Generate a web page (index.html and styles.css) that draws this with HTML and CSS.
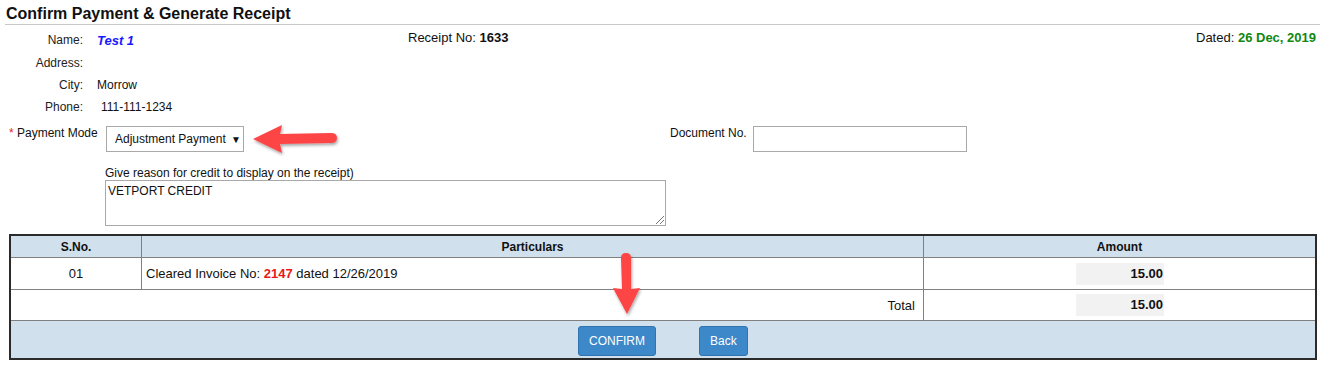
FILE: index.html
```html
<!DOCTYPE html>
<html lang="en">
<head>
  <meta charset="UTF-8" />
  <title>Confirm Payment &amp; Generate Receipt</title>
  <link rel="stylesheet" href="styles.css">
</head>
<body>
  <h1 class="page-title">Confirm Payment &amp; Generate Receipt</h1>

  <div class="receipt-head">
    <div class="client-info">
      <div class="info-row"><span class="info-label">Name:</span><span class="info-value client-name">Test 1</span></div>
      <div class="info-row"><span class="info-label">Address:</span><span class="info-value"></span></div>
      <div class="info-row"><span class="info-label">City:</span><span class="info-value">Morrow</span></div>
      <div class="info-row"><span class="info-label">Phone:</span><span class="info-value phone">111-111-1234</span></div>
    </div>
    <div class="receipt-no">Receipt No: <b>1633</b></div>
    <div class="receipt-date">Dated: <b>26 Dec, 2019</b></div>
  </div>

  <div class="payment-row">
    <div class="mode-group">
      <label class="mode-label"><span class="req">*</span> Payment Mode</label>
      <div class="mode-select">Adjustment Payment <span class="caret">&#9660;</span></div>
    </div>
    <div class="doc-group">
      <label class="doc-label">Document No.</label>
      <div class="doc-input"></div>
    </div>
    <svg class="arrow arrow-left" width="96" height="40" viewBox="0 0 96 40">
      <defs>
        <filter id="sh" x="-20%" y="-30%" width="140%" height="170%">
          <feDropShadow dx="1" dy="2" stdDeviation="1.5" flood-color="#000" flood-opacity="0.35"/>
        </filter>
      </defs>
      <g filter="url(#sh)">
        <path d="M4 19 L33 5 L31 14 L82 13 Q88 13 88 18 Q88 23 82 23 L31 24 L33 33 Z" fill="#fd4545"/>
      </g>
    </svg>
  </div>

  <div class="reason">
    <div class="reason-label">Give reason for credit to display on the receipt)</div>
    <div class="reason-box">VETPORT CREDIT<span class="grip"></span></div>
  </div>

  <div class="table-wrap">
    <table class="items">
      <thead>
        <tr>
          <th class="col-sno">S.No.</th>
          <th class="col-part">Particulars</th>
          <th class="col-amt">Amount</th>
        </tr>
      </thead>
      <tbody>
        <tr class="item-row">
          <td class="sno">01</td>
          <td>Cleared Invoice No: <b class="inv">2147</b> dated 12/26/2019</td>
          <td class="amt"><span class="amt-box">15.00</span></td>
        </tr>
        <tr class="total-row">
          <td colspan="2" class="total-label">Total</td>
          <td class="amt"><span class="amt-box">15.00</span></td>
        </tr>
        <tr class="actions-row">
          <td colspan="3">
            <div class="actions">
              <button class="btn">CONFIRM</button>
              <button class="btn">Back</button>
            </div>
          </td>
        </tr>
      </tbody>
    </table>
    <svg class="arrow arrow-down" width="40" height="70" viewBox="0 0 40 70">
      <g filter="url(#sh)">
        <path d="M20 62 L6 36 L15 37 L14 6 Q14 1 19 1 Q24 1 24 6 L24 37 L33 36 Z" fill="#fd4545"/>
      </g>
    </svg>
  </div>
</body>
</html>
```

FILE: styles.css
```css
body {
  margin: 0;
  padding: 0 9px 0 5px;
  font-family: "Liberation Sans", Arial, sans-serif;
  font-size: 12px;
  color: #111;
  background: #fff;
}

.page-title {
  font-size: 16px;
  font-weight: bold;
  line-height: 18px;
  margin: 5px 0 0 0;
  padding: 0 0 1px 1px;
  border-bottom: 1px solid #c8c8c8;
}

.receipt-head {
  display: flex;
  align-items: flex-start;
  padding-top: 4px;
}

.client-info {
  width: 400px;
}

.info-row {
  display: flex;
  height: 22px;
  align-items: center;
}

.info-row + .info-row {
  padding-top: 1px;
  height: 21px;
}

.info-label {
  width: 78px;
  text-align: right;
  color: #222;
}

.info-value {
  padding-left: 14px;
}

.client-name {
  color: #1a1aff;
  font-weight: bold;
  font-style: italic;
  font-size: 13px;
}

.phone {
  padding-left: 18px;
}

.receipt-no {
  font-size: 13px;
  padding-left: 3px;
  margin-top: 1px;
}

.receipt-date {
  font-size: 13px;
  margin-left: auto;
  margin-top: 1px;
  padding-right: 4px;
}

.receipt-date b {
  color: #118811;
}

.payment-row {
  position: relative;
  display: flex;
  margin-top: 9px;
  height: 26px;
}

.mode-group {
  display: flex;
  width: 665px;
}

.mode-label {
  width: 97px;
  padding-left: 4px;
  line-height: 15px;
}

.req {
  color: #e22;
}

.mode-select {
  box-sizing: border-box;
  width: 138px;
  height: 26px;
  border: 1px solid #a9a9a9;
  padding-left: 8px;
  line-height: 24px;
  font-size: 12px;
}

.caret {
  font-size: 10px;
  padding-left: 2px;
}

.doc-group {
  display: flex;
}

.doc-label {
  width: 83px;
  line-height: 15px;
}

.doc-input {
  box-sizing: border-box;
  width: 214px;
  height: 26px;
  border: 1px solid #a9a9a9;
}

.arrow {
  position: absolute;
}

.arrow-left {
  left: 244px;
  top: -6px;
}

.reason {
  padding-left: 100px;
  margin-top: 15px;
}

.reason-label {
  line-height: 13px;
}

.reason-box {
  position: relative;
  box-sizing: border-box;
  width: 561px;
  height: 46px;
  border: 1px solid #a9a9a9;
  padding: 3px 2px;
  font-size: 12px;
}

.grip {
  position: absolute;
  right: 1px;
  bottom: 1px;
  width: 8px;
  height: 8px;
  background: linear-gradient(135deg, transparent 45%, #777 45%, #777 52%, transparent 52%, transparent 70%, #777 70%, #777 77%, transparent 77%);
}

.table-wrap {
  position: relative;
  margin: 8px 0 0 4px;
}

.items {
  width: 1308px;
  border-collapse: collapse;
  border: 2px solid #2b2b2b;
}

.items th {
  background: #d0e0ec;
  font-weight: bold;
  height: 21px;
  padding: 0;
  border: 1px solid #808080;
  border-top: none;
}

.items td {
  border: 1px solid #808080;
  padding: 0 4px;
  font-size: 13px;
}

.col-sno {
  width: 130px;
}

.col-amt {
  width: 391px;
}

.item-row td {
  height: 31px;
}

.sno {
  text-align: center;
}

.inv {
  color: #e81818;
}

.total-row td {
  height: 30px;
}

.total-label {
  text-align: right;
  padding-right: 8px !important;
}

.amt {
  padding-left: 152px !important;
}

.amt-box {
  display: block;
  width: 88px;
  height: 22px;
  line-height: 22px;
  background: #f2f2f2;
  text-align: right;
  font-weight: bold;
  box-sizing: border-box;
  padding-right: 1px;
}

.actions-row td {
  background: #d0e0ec;
  height: 37px;
  border-top: 1px solid #808080;
}

.actions {
  display: flex;
  gap: 43px;
  padding-left: 563px;
  padding-top: 2px;
}

.btn {
  background: #3d88c9;
  color: #fff;
  border: 1px solid #2f74b0;
  border-radius: 3px;
  font-family: "Liberation Sans", Arial, sans-serif;
  font-size: 12px;
  height: 30px;
  padding: 0 10px;
}

.arrow-down {
  left: 598px;
  top: 18px;
}
```
